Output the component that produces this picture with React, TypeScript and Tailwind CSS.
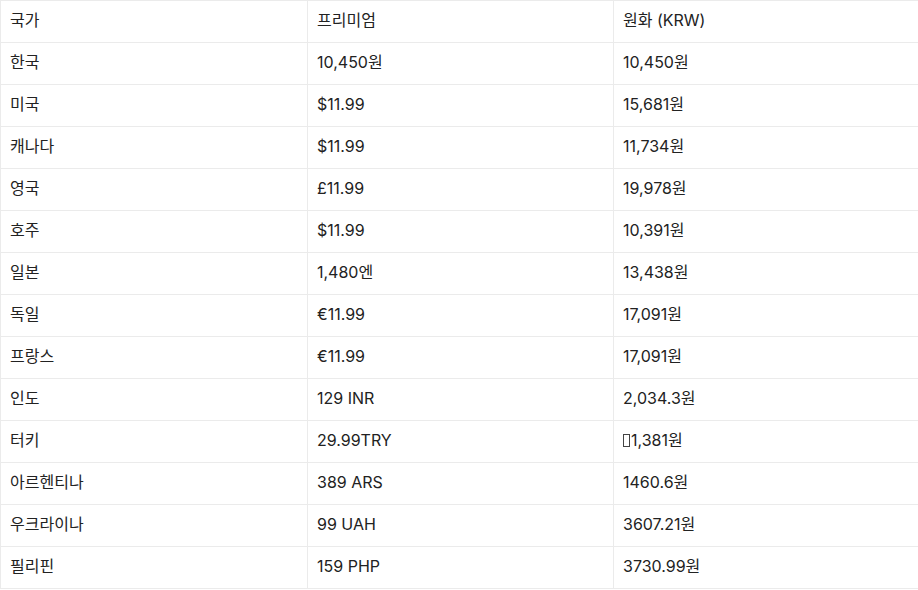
import React from "react";

const rows: [string, string, string][] = [
  ["한국", "10,450원", "10,450원"],
  ["미국", "$11.99", "15,681원"],
  ["캐나다", "$11.99", "11,734원"],
  ["영국", "£11.99", "19,978원"],
  ["호주", "$11.99", "10,391원"],
  ["일본", "1,480엔", "13,438원"],
  ["독일", "€11.99", "17,091원"],
  ["프랑스", "€11.99", "17,091원"],
  ["인도", "129 INR", "2,034.3원"],
  ["터키", "29.99TRY", "TOFU1,381원"],
  ["아르헨티나", "389 ARS", "1460.6원"],
  ["우크라이나", "99 UAH", "3607.21원"],
  ["필리핀", "159 PHP", "3730.99원"],
];

function Cell({ text }: { text: string }) {
  if (text.startsWith("TOFU")) {
    return (
      <>
        <span className="inline-block w-[7px] h-[13px] border border-[#444] align-[-1px] mr-[1px]" />
        {text.slice(4)}
      </>
    );
  }
  return <>{text}</>;
}

export default function App() {
  return (
    <div
      className="w-[918px] h-[590px] bg-white text-[#222] text-[16px]"
      style={{ fontFamily: 'Inter, "Noto Sans CJK KR", sans-serif' }}
    >
      <table className="w-[918px] border-collapse table-fixed">
        <colgroup>
          <col className="w-[307px]" />
          <col className="w-[306px]" />
          <col className="w-[305px]" />
        </colgroup>
        <tbody>
          <tr className="h-[42px]">
            <td className="border border-[#ebebeb] px-[9px] py-0 align-middle pb-[3px]">국가</td>
            <td className="border border-[#ebebeb] px-[9px] py-0 align-middle pb-[3px]">프리미엄</td>
            <td className="border border-[#ebebeb] px-[9px] py-0 align-middle pb-[3px]">원화 (KRW)</td>
          </tr>
          {rows.map((r, i) => (
            <tr key={i} className="h-[42px]">
              {r.map((c, j) => (
                <td key={j} className="border border-[#ebebeb] px-[9px] py-0 align-middle pb-[3px]">
                  <Cell text={c} />
                </td>
              ))}
            </tr>
          ))}
        </tbody>
      </table>
    </div>
  );
}
